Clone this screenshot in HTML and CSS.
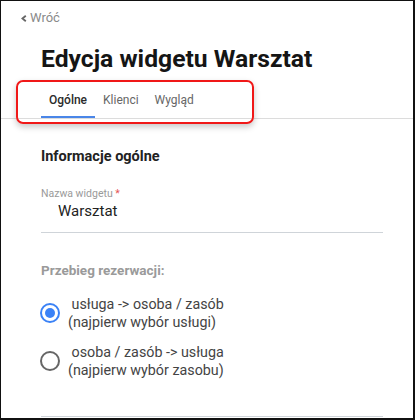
FILE: index.html
```html
<!DOCTYPE html>
<html lang="pl">
<head>
<meta charset="utf-8">
<link rel="stylesheet" href="styles.css">
</head>
<body>
<div class="frame">
  <a class="back" href="#"><svg class="chev" width="6" height="7" viewBox="0 0 6 7"><polyline points="4.8,0.8 1.4,3.5 4.8,6.2" fill="none" stroke="#666" stroke-width="1.9" stroke-linejoin="miter"/></svg>Wróć</a>
  <h1 class="title">Edycja widgetu Warsztat</h1>
  <nav class="tabs">
    <span class="tab active">Ogólne</span><span class="tab">Klienci</span><span class="tab">Wygląd</span>
    <div class="highlight"></div>
  </nav>
  <section class="content">
    <h2 class="section-title">Informacje ogólne</h2>
    <div class="field">
      <div class="field-label">Nazwa widgetu <span class="req">*</span></div>
      <div class="field-value">Warsztat</div>
    </div>
    <div class="group-label">Przebieg rezerwacji:</div>
    <div class="options">
      <label class="option">
        <span class="radio checked"></span>
        <span class="option-text">&nbsp;usługa -&gt; osoba / zasób<br>(najpierw wybór usługi)</span>
      </label>
      <label class="option">
        <span class="radio"></span>
        <span class="option-text">&nbsp;osoba / zasób -&gt; usługa<br>(najpierw wybór zasobu)</span>
      </label>
    </div>
    <div class="divider"></div>
  </section>
</div>
</body>
</html>
```

FILE: styles.css
```css
* { box-sizing: border-box; }
html, body { margin: 0; padding: 0; background: #fff; }
body { font-family: Roboto, "Liberation Sans", sans-serif; }

.frame {
  width: 415px;
  height: 420px;
  border: solid #111;
  border-width: 1px 2px 2px 1px;
  overflow: hidden;
  background: #fff;
}

.back {
  display: flex;
  align-items: center;
  padding: 9px 0 0 20px;
  font-size: 13px;
  line-height: 16px;
  color: #8a8a8a;
  text-decoration: none;
}
.chev {
  display: block;
  margin-right: 3px;
  margin-top: 1px;
}

.title {
  margin: 19px 0 0 40px;
  font-size: 24.7px;
  line-height: 28px;
  font-weight: 700;
  color: #151515;
}

.tabs {
  position: relative;
  display: flex;
  margin-top: 9px;
  padding-left: 40px;
  border-bottom: 1px solid #dcdcdc;
}
.tab {
  padding: 10px 8px 8px;
  font-size: 12px;
  line-height: 16px;
  color: #666;
  border-bottom: 2px solid transparent;
}
.tab.active {
  color: #2b2b2b;
  font-weight: 500;
  border-bottom-color: #4a86e8;
}
.highlight {
  position: absolute;
  left: 15px;
  top: -2px;
  width: 238px;
  height: 44px;
  border: 2px solid #f01818;
  border-radius: 7px;
  box-shadow: 0 3px 6px rgba(0,0,0,0.22);
  pointer-events: none;
}

.content {
  width: 382px;
  padding-left: 40px;
}
.section-title {
  margin: 29px 0 0;
  font-size: 14.5px;
  line-height: 18px;
  font-weight: 700;
  color: #222;
}
.field {
  margin-top: 22px;
  padding-bottom: 12px;
  border-bottom: 1px solid #cfd4d9;
}
.field-label {
  font-size: 10.5px;
  line-height: 12px;
  color: #9a9a9a;
}
.req { color: #e55353; }
.field-value {
  margin-top: 2px;
  padding-left: 17px;
  font-size: 15px;
  line-height: 18px;
  color: #222;
}
.group-label {
  margin-top: 29px;
  font-size: 13.5px;
  line-height: 16px;
  font-weight: 700;
  color: #9a9a9a;
}
.options {
  display: flex;
  flex-direction: column;
  gap: 12px;
  margin-top: 17px;
}
.option {
  display: flex;
  align-items: center;
  gap: 8px;
  margin-left: -1px;
}
.radio {
  flex: none;
  width: 20px;
  height: 20px;
  border-radius: 50%;
  border: 2px solid #666;
  display: flex;
  align-items: center;
  justify-content: center;
}
.radio.checked { border-color: #3b82f6; }
.radio.checked::after {
  content: "";
  width: 10px;
  height: 10px;
  border-radius: 50%;
  background: #3b82f6;
}
.option-text {
  font-size: 14.3px;
  line-height: 18px;
  color: #444;
}
.divider {
  margin-top: 37px;
  border-top: 1px solid #cfd4d9;
}
```
